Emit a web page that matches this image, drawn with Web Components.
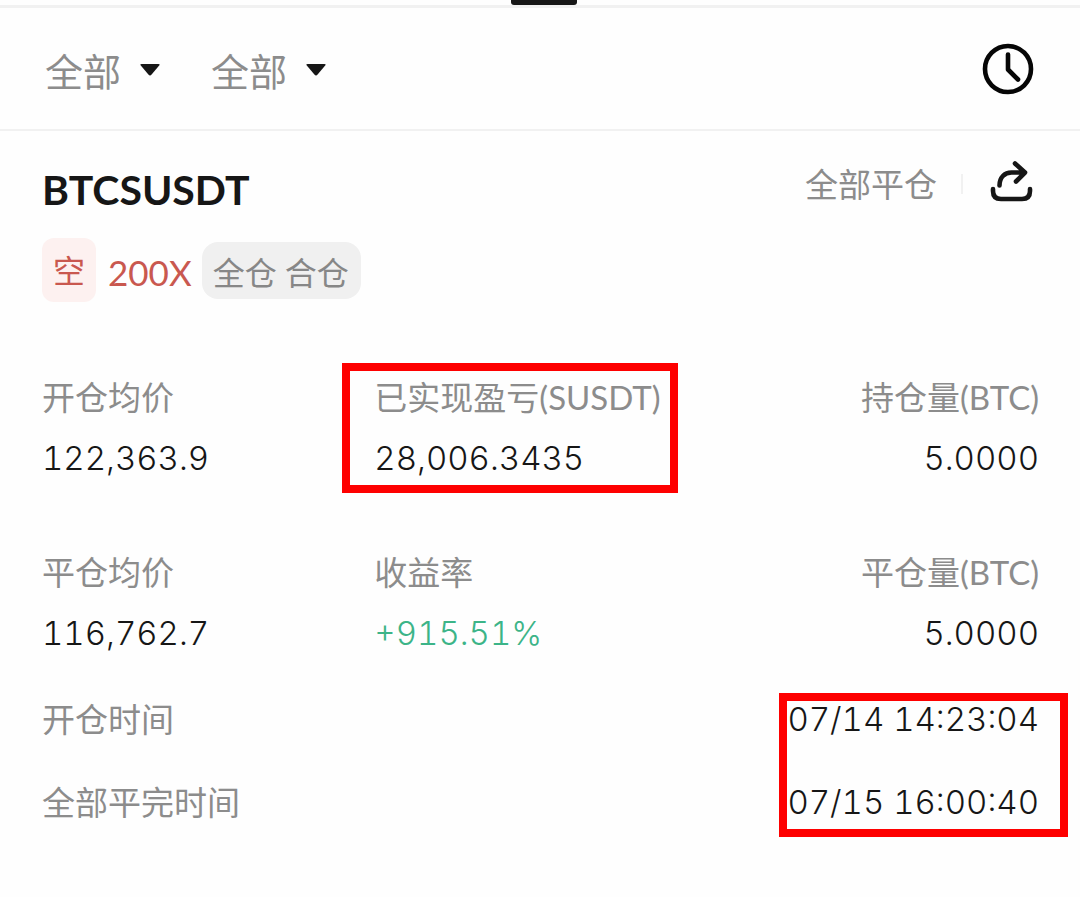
<!DOCTYPE html>
<html lang="zh-CN">
<head>
<meta charset="utf-8">
<meta name="viewport" content="width=device-width, initial-scale=1">
<title>BTCSUSDT</title>
<style>
  :root { --ink: #161616; --muted: #8c8c8c; --line: #f1f1f1; --mark: #fe0000; --gain: #3cb488; --loss: #c9584f; }
  body { margin: 0; background: #fefefe; color: var(--ink); font-family: Lato, "Noto Sans CJK SC", sans-serif; }
</style>
</head>
<body>
<position-history></position-history>
<script>
const define = (name, html) => {
  const template = document.createElement('template');
  template.innerHTML = html;
  customElements.define(name, class extends HTMLElement {
    constructor() {
      super();
      this.attachShadow({ mode: 'open' }).append(template.content.cloneNode(true));
    }
  });
};

define('tab-indicator', `
  <style>
    :host { display: flex; justify-content: center; height: 5px; padding-left: 8px; border-bottom: 3px solid var(--line); }
    span { width: 66px; height: 5px; border-radius: 0 0 3px 3px; background: var(--ink); }
  </style>
  <span></span>`);

define('filter-select', `
  <style>
    :host { display: block; position: relative; }
    select { display: block; appearance: none; margin: 0; padding: 0 39px 0 0; border: 0; background: none;
      color: var(--muted); font: 400 38px/56px Lato, "Noto Sans CJK SC", sans-serif; height: 56px; }
    svg { position: absolute; right: 0; top: 20px; pointer-events: none; }
  </style>
  <select aria-label="筛选"><option>全部</option></select>
  <svg width="22" height="14" viewBox="0 0 22 14" aria-hidden="true"><path d="M2.500 1h17q2 0 .7 1.600l-7.600 9q-1.600 1.800-3.200 0l-7.600-9Q.5 1 2.500 1z" fill="#161616"/></svg>`);

define('filter-bar', `
  <style>
    :host { display: flex; align-items: center; justify-content: space-between; height: 121px; padding: 0 45px; border-bottom: 2px solid var(--line); }
    div { display: flex; gap: 50px; padding-top: 4px; }
    button { display: block; padding: 0; border: 0; background: none; }
    svg { display: block; }
  </style>
  <div><filter-select></filter-select><filter-select></filter-select></div>
  <button aria-label="历史"><svg width="54" height="54" viewBox="0 0 54 54" fill="none" stroke="#060606" stroke-width="4.6" stroke-linecap="round" stroke-linejoin="round"><circle cx="27" cy="27" r="23"/><path d="M27 12.500v15l10 10"/></svg></button>`);

define('position-header', `
  <style>
    :host { display: flex; justify-content: space-between; align-items: flex-start; }
    h1 { margin: 0; font-size: 41px; line-height: 60px; font-weight: 700; }
    div { display: flex; align-items: center; color: var(--muted); font-size: 33px; line-height: 48px; }
    i { width: 2px; height: 20px; margin: 0 26px 0 24px; background: var(--line); }
    button { padding: 0; border: 0; background: none; }
    svg { display: block; }
  </style>
  <h1>BTCSUSDT</h1>
  <div><span>全部平仓</span><i></i><button aria-label="分享"><svg width="50" height="48" viewBox="0 0 50 48" fill="none" stroke="#161616" stroke-width="4.6" stroke-linecap="round" stroke-linejoin="round"><path d="M4 29v2q0 8 8 8h21q8 0 8-8v-2M10.500 25.500c0-8 5-13 12-13h13M26 3.500l10 9-9 9"/></svg></button></div>`);

define('position-tags', `
  <style>
    :host { display: flex; align-items: center; font-size: 32px; }
    .side { padding: 2px 11px 0; border-radius: 12px; background: #fdf1f0; color: var(--loss); line-height: 62px; }
    .lever { margin: 0 10px 0 12px; color: var(--loss); font-size: 35px; line-height: 56px; padding-top: 4px; }
    .mode { padding: 5px 12px 0 11px; border-radius: 16px; background: #f0f0f0; color: #878787; line-height: 52px; }
  </style>
  <span class="side">空</span><span class="lever">200X</span><span class="mode">全仓 合仓</span>`);

define('stat-cell', `
  <style>
    :host { display: flex; flex-direction: column; gap: 13px; position: relative; line-height: 48px; white-space: nowrap; }
    :host([end]) { align-items: flex-end; }
    .label { color: var(--muted); font-size: 33px; }
    .value { font-family: Inter, sans-serif; font-size: 33px; font-weight: 300; font-variant-numeric: tabular-nums; }
    :host([gain]) .value { color: var(--gain); }
    :host([marked])::before { content: ""; position: absolute; inset: -10px -17px -11px -32px; border: 8px solid var(--mark); }
  </style>
  <span class="label"><slot name="label"></slot></span>
  <span class="value"><slot></slot></span>`);

define('stat-grid', `
  <style>
    :host { display: grid; grid-template-columns: repeat(3, 1fr); row-gap: 66px; }
    stat-cell { justify-self: start; }
    stat-cell[end] { justify-self: end; }
  </style>
  <stat-cell><span slot="label">开仓均价</span>122,363.9</stat-cell>
  <stat-cell marked><span slot="label">已实现盈亏(SUSDT)</span>28,006.3435</stat-cell>
  <stat-cell end><span slot="label">持仓量(BTC)</span>5.0000</stat-cell>
  <stat-cell><span slot="label">平仓均价</span>116,762.7</stat-cell>
  <stat-cell gain><span slot="label">收益率</span>+915.51%</stat-cell>
  <stat-cell end><span slot="label">平仓量(BTC)</span>5.0000</stat-cell>`);

define('time-list', `
  <style>
    :host { display: flex; justify-content: space-between; line-height: 48px; }
    div { display: flex; flex-direction: column; gap: 35px; position: relative; }
    .labels { color: var(--muted); font-size: 33px; }
    .times { align-items: flex-end; font-family: Inter, sans-serif; font-size: 33px; font-weight: 300; font-variant-numeric: tabular-nums; }
    .times::before { content: ""; position: absolute; inset: -2px -29px -11px -8px; border: 8px solid var(--mark); }
  </style>
  <div class="labels"><span>开仓时间</span><span>全部平完时间</span></div>
  <div class="times"><time>07/14 14:23:04</time><time>07/15 16:00:40</time></div>`);

define('position-card', `
  <style>
    :host { display: block; padding: 29px 41px 60px 42px; }
    position-tags { margin: 18px 0 71px; }
    time-list { margin-top: 38px; }
  </style>
  <position-header></position-header>
  <position-tags></position-tags>
  <stat-grid></stat-grid>
  <time-list></time-list>`);

define('position-history', `
  <style>:host { display: block; }</style>
  <tab-indicator></tab-indicator>
  <filter-bar></filter-bar>
  <main><position-card></position-card></main>`);
</script>
</body>
</html>
